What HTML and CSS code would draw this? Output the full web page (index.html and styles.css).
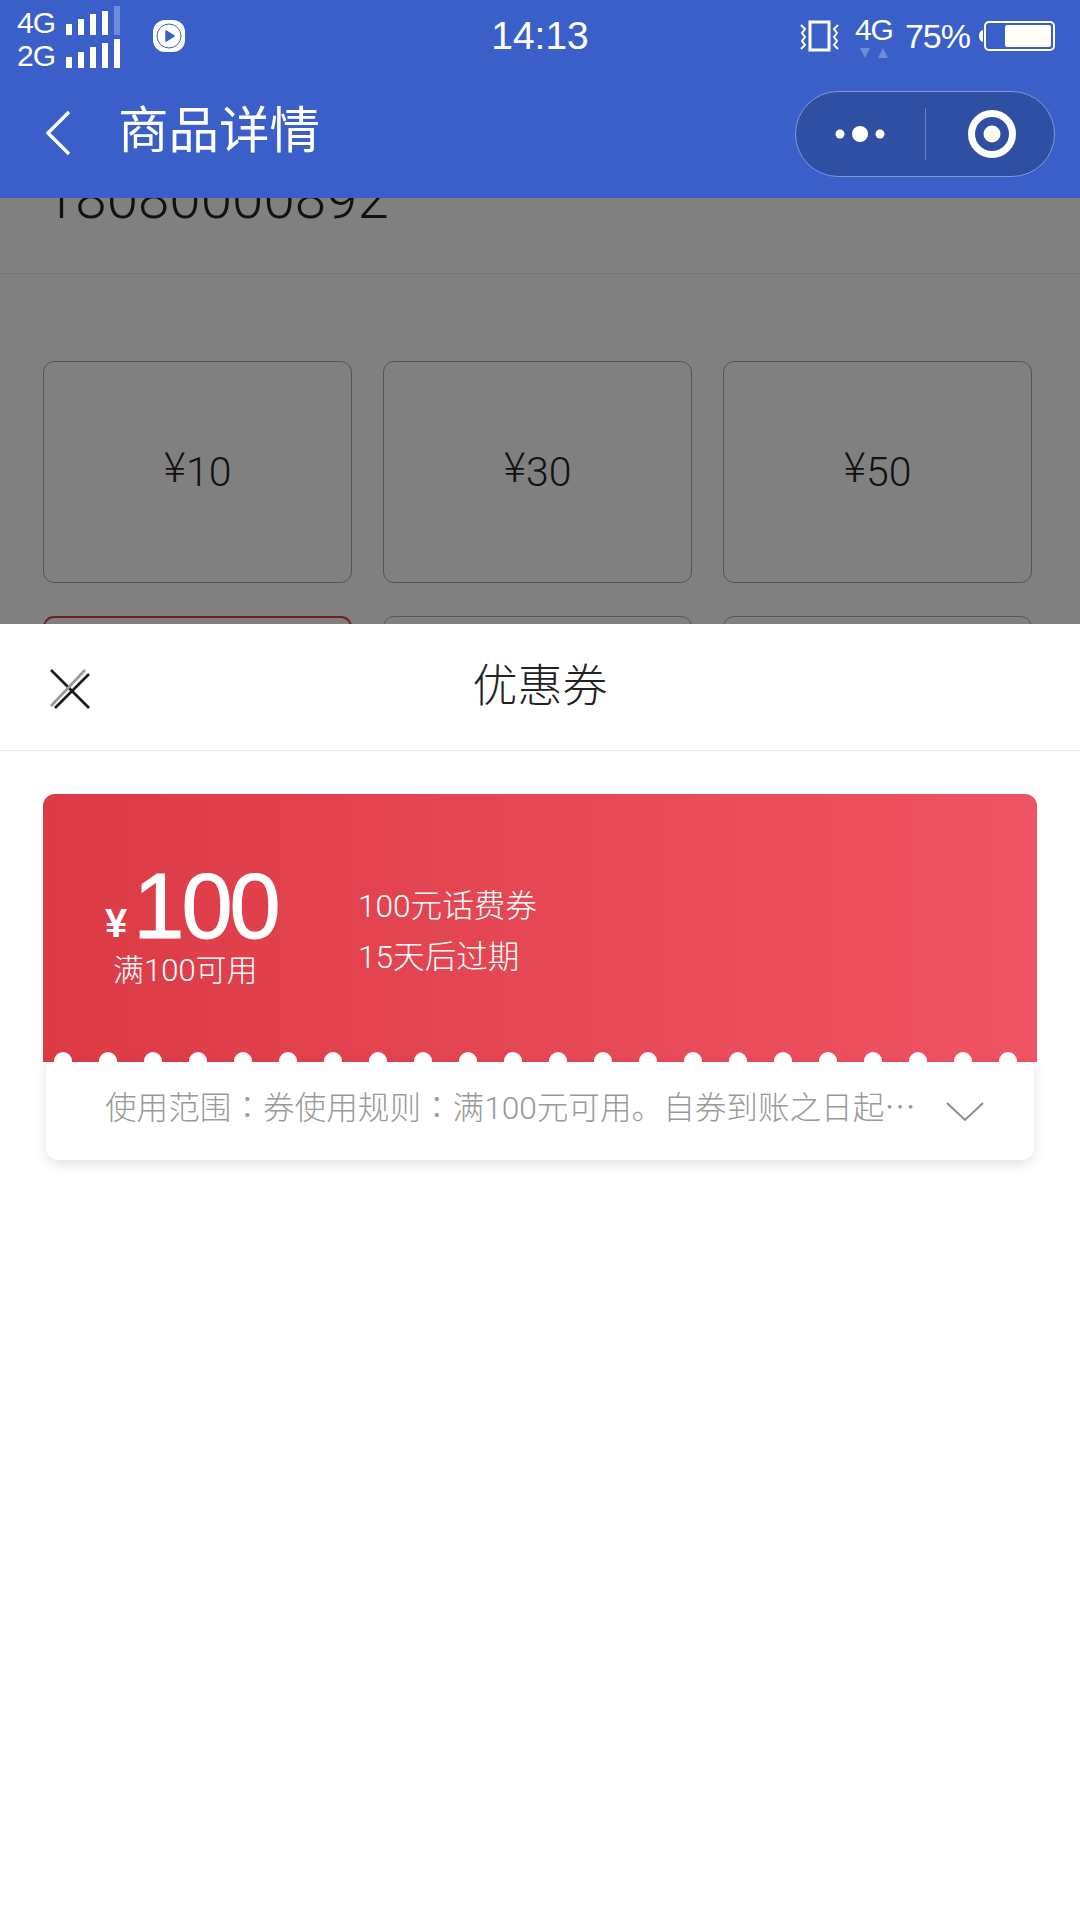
FILE: index.html
```html
<!DOCTYPE html>
<html lang="zh-CN">
<head>
    <meta charset="UTF-8">
    <title>商品详情</title>
    <link rel="stylesheet" href="styles.css">
</head>
<body>

<!-- Blue header -->
<header class="top">
    <div class="status">
        <div class="status-left">
            <div class="nets">
                <div class="net-row">
                    <span class="net-name">4G</span>
                    <svg class="bars" width="56" height="30" viewBox="0 0 56 30">
                        <rect x="0" y="18" width="6" height="11" fill="#fff"/>
                        <rect x="12" y="13" width="6" height="16" fill="#fff"/>
                        <rect x="24" y="8" width="6" height="21" fill="#fff"/>
                        <rect x="36" y="5" width="6" height="24" fill="#fff"/>
                        <rect x="48" y="0" width="6" height="29" fill="#6f8bdc"/>
                    </svg>
                </div>
                <div class="net-row">
                    <span class="net-name">2G</span>
                    <svg class="bars" width="56" height="30" viewBox="0 0 56 30">
                        <rect x="0" y="18" width="6" height="11" fill="#fff"/>
                        <rect x="12" y="13" width="6" height="16" fill="#fff"/>
                        <rect x="24" y="8" width="6" height="21" fill="#fff"/>
                        <rect x="36" y="4" width="6" height="25" fill="#fff"/>
                        <rect x="48" y="0" width="6" height="29" fill="#fff"/>
                    </svg>
                </div>
            </div>
            <svg class="media" width="32" height="32" viewBox="0 0 32 32">
                <rect width="32" height="32" rx="12" fill="#fff"/>
                <circle cx="16" cy="16" r="12" fill="none" stroke="#3a5fc8" stroke-width="1"/>
                <path d="M13 11 L21 16 L13 21 Z" fill="#3a5fc8" stroke="#3a5fc8" stroke-width="1.5" stroke-linejoin="round"/>
            </svg>
        </div>
        <div class="clock">14:13</div>
        <div class="status-right">
            <svg class="vibrate" width="39" height="32" viewBox="0 0 39 32">
                <rect x="10" y="2" width="19" height="28" fill="none" stroke="#fff" stroke-width="3"/>
                <path d="M1 5 L5 9 L2 13 L5 17 L2 21 L5 25 L1 29" fill="none" stroke="#fff" stroke-width="2"/>
                <path d="M38 5 L34 9 L37 13 L34 17 L37 21 L34 25 L38 29" fill="none" stroke="#fff" stroke-width="2"/>
            </svg>
            <div class="net-right">
                <span class="net-name">4G</span>
                <svg width="30" height="10" viewBox="0 0 30 10">
                    <path d="M1 0 H11 L6 10 Z" fill="#6f8bdc"/>
                    <path d="M19 10 H29 L24 0 Z" fill="#6f8bdc"/>
                </svg>
            </div>
            <span class="percent">75%</span>
            <svg class="battery" width="76" height="30" viewBox="0 0 76 30">
                <path d="M4 9 Q0 10 0 15 Q0 20 4 21 Z" fill="#fff"/>
                <rect x="6" y="1" width="69" height="28" rx="4" fill="none" stroke="#fff" stroke-width="2"/>
                <rect x="26" y="4" width="46" height="22" rx="2" fill="#fffdf5"/>
            </svg>
        </div>
    </div>
    <div class="nav">
        <svg class="back" width="26" height="46" viewBox="0 0 26 46">
            <path d="M24 2 L3 23 L24 44" fill="none" stroke="#fff" stroke-width="3.4"/>
        </svg>
        <span class="nav-title">商品详情</span>
        <div class="capsule">
            <div class="capsule-side">
                <svg width="50" height="18" viewBox="0 0 50 18">
                    <circle cx="5" cy="9" r="4.5" fill="#fff"/>
                    <circle cx="25" cy="9" r="8" fill="#fff"/>
                    <circle cx="45" cy="9" r="4.5" fill="#fff"/>
                </svg>
            </div>
            <div class="capsule-line"></div>
            <div class="capsule-side">
                <svg class="capsule-ring" width="48" height="48" viewBox="0 0 48 48">
                    <circle cx="24" cy="24" r="20.5" fill="none" stroke="#fff" stroke-width="7"/>
                    <circle cx="24" cy="24" r="8.5" fill="#fffdf5"/>
                </svg>
            </div>
        </div>
    </div>
</header>

<!-- Page behind the sheet, dimmed -->
<div class="behind">
    <div class="phone-row">18080000892</div>
    <div class="amounts">
        <div class="amount"><span><span class="cur">¥</span>10</span></div>
        <div class="amount"><span><span class="cur">¥</span>30</span></div>
        <div class="amount"><span><span class="cur">¥</span>50</span></div>
        <div class="amount amount-on"><span><span class="cur">¥</span>100</span></div>
        <div class="amount"><span><span class="cur">¥</span>200</span></div>
        <div class="amount"><span><span class="cur">¥</span>300</span></div>
    </div>
</div>

<!-- Coupon sheet -->
<div class="sheet">
    <div class="sheet-head">
        <svg class="close" width="40" height="40" viewBox="0 0 40 40">
            <path d="M1 1 L39 39" stroke="#1a1a1a" stroke-width="2.6"/>
            <path d="M1 37 L35 1" stroke="#999" stroke-width="2.6"/>
            <path d="M5 39 L39 5" stroke="#1a1a1a" stroke-width="2.6"/>
        </svg>
        <span class="sheet-title">优惠券</span>
    </div>

    <div class="coupon">
        <div class="coupon-top">
            <div class="coupon-main">
                <div class="price">
                    <div class="price-line"><span class="yen">¥</span><span class="price-num">100</span></div>
                    <div class="price-rule">满100可用</div>
                </div>
                <div class="coupon-info">
                    <div>100元话费券</div>
                    <div>15天后过期</div>
                </div>
            </div>
            <div class="bumps">
                <i></i><i></i><i></i><i></i><i></i><i></i><i></i><i></i><i></i><i></i><i></i>
                <i></i><i></i><i></i><i></i><i></i><i></i><i></i><i></i><i></i><i></i><i></i>
            </div>
        </div>
        <div class="coupon-foot">
            <span class="coupon-desc">使用范围<span class="colon" lang="zh-TW">&#xFF1A;</span>券使用规则<span class="colon" lang="zh-TW">&#xFF1A;</span>满100元可用。自券到账之日起⋯</span>
            <svg class="chevron" width="38" height="20" viewBox="0 0 38 20">
                <path d="M1 1 L19 18 L37 1" fill="none" stroke="#8a8a8a" stroke-width="1.8"/>
            </svg>
        </div>
    </div>
</div>

</body>
</html>
```

FILE: styles.css
```css
* {
    box-sizing: border-box;
}

html, body {
    margin: 0;
    height: 1920px;
    overflow: hidden;
}

body {
    font-family: "Liberation Sans", "Noto Sans CJK SC", sans-serif;
    font-weight: 300;
    background: #fff;
    display: flex;
    flex-direction: column;
}

/* Header */
.top {
    height: 198px;
    flex: none;
    background: #3a5fc8;
    color: #fff;
}

.status {
    height: 72px;
    display: grid;
    grid-template-columns: 1fr auto 1fr;
    align-items: center;
    padding: 0 25px 0 17px;
}

.status-left {
    display: flex;
    align-items: center;
    gap: 31px;
}

.nets {
    display: flex;
    flex-direction: column;
    margin-top: -1px;
}

.net-row {
    display: flex;
    align-items: flex-end;
    gap: 11px;
    height: 33px;
}

.net-name {
    font-size: 30px;
    line-height: 26px;
    letter-spacing: -1px;
}

.bars {
    display: block;
}

.clock {
    font-size: 39px;
    margin-left: 8px;
}

.status-right {
    display: flex;
    justify-content: flex-end;
    align-items: center;
}

.vibrate {
    margin-right: 16px;
}

.net-right {
    display: flex;
    flex-direction: column;
    align-items: center;
    gap: 5px;
    margin-right: 12px;
    margin-top: 2px;
}

.net-right svg {
    display: block;
}

.percent {
    font-size: 34px;
    letter-spacing: -1px;
    margin-right: 9px;
}

.battery {
    display: block;
}

.nav {
    height: 126px;
    display: flex;
    align-items: center;
    padding: 0 25px 12px 45px;
}

.back {
    flex: none;
    margin-top: 8px;
}

.nav-title {
    font-size: 50.5px;
    font-weight: 400;
    margin: -6px 0 0 47px;
    flex: 1;
}

.capsule {
    width: 260px;
    height: 86px;
    margin-top: 10px;
    border: 1px solid #7f97dc;
    border-radius: 43px;
    background: #2f50a2;
    display: flex;
    align-items: center;
}

.capsule-side {
    flex: 1;
    display: flex;
    justify-content: center;
    align-items: center;
}

.capsule-side svg {
    display: block;
}

.capsule-ring {
    margin-left: 4px;
}

.capsule-line {
    width: 1px;
    height: 52px;
    background: #6480cc;
}

/* Dimmed page */
.behind {
    height: 426px;
    flex: none;
    overflow: hidden;
    background: #808080;
    color: #111;
    font-family: Roboto, "Liberation Sans", sans-serif;
}

.phone-row {
    border-bottom: 1px solid #767676;
    margin-top: -30px;
    height: 106px;
    padding-left: 44px;
    font-size: 56.5px;
    line-height: 62px;
}

.amounts {
    display: grid;
    grid-template-columns: repeat(3, 309px);
    column-gap: 31px;
    row-gap: 33px;
    padding: 87px 0 0 43px;
}

.amount {
    height: 222px;
    border: 1.5px solid #555;
    border-radius: 11px;
    display: flex;
    justify-content: center;
    align-items: center;
    font-size: 41px;
    line-height: 48px;
}

.cur {
    font-family: "Noto Sans CJK SC", sans-serif;
    font-size: 42px;
    line-height: 0;
    vertical-align: 4px;
}

.amount-on {
    border: 2px solid #702020;
}

/* Sheet */
.sheet {
    flex: 1;
    background: #fff;
}

.sheet-head {
    height: 127px;
    border-bottom: 1px solid #ececec;
    display: flex;
    justify-content: center;
    align-items: center;
    position: relative;
}

.close {
    position: absolute;
    left: 50px;
    top: 45px;
}

.sheet-title {
    font-size: 45px;
    color: #222;
    margin-top: -9px;
}

.coupon {
    margin: 43px 43px 0 43px;
    color: #fff;
}

.coupon-top {
    height: 268px;
    border-radius: 12px 12px 0 0;
    background: linear-gradient(90deg, #dc3b45, #ef5464);
    display: flex;
    flex-direction: column;
}

.coupon-main {
    flex: 1;
    display: flex;
    padding: 74px 0 0 62px;
}

.price {
    width: 253px;
}

.price-line {
    display: flex;
    align-items: flex-end;
    height: 76px;
}

.yen {
    font-family: "Liberation Sans", sans-serif;
    font-size: 40px;
    font-weight: 700;
    line-height: 44px;
    margin-right: 6px;
    margin-bottom: -1px;
}

.price-num {
    font-size: 92px;
    line-height: 76px;
    letter-spacing: -3px;
    -webkit-text-stroke: 1px #fff;
}

.price-rule {
    font-family: Roboto, "Noto Sans CJK SC", sans-serif;
    font-size: 31px;
    line-height: 40px;
    margin: 7px 0 0 8px;
}

.coupon-info {
    font-family: Roboto, "Noto Sans CJK SC", sans-serif;
    font-size: 31.6px;
    line-height: 51px;
    margin-top: 13px;
}

.bumps {
    height: 10px;
    display: flex;
    gap: 27px;
    padding-left: 11px;
}

.bumps i {
    display: block;
    width: 18px;
    height: 10px;
    background: #fff;
    border-radius: 9px 9px 0 0;
}

.coupon-foot {
    margin: 0 3px;
    height: 98px;
    background: #fff;
    border-radius: 0 0 12px 12px;
    box-shadow: 0 4px 14px rgba(0, 0, 0, 0.12);
    display: flex;
    align-items: center;
    padding: 0 0 0 59px;
}

.coupon-desc {
    font-family: Roboto, "Noto Sans CJK SC", sans-serif;
    font-size: 31.6px;
    color: #999;
    white-space: nowrap;
    margin-top: -12px;
    width: 841px;
}

.colon {
    font-family: "Noto Sans CJK TC", sans-serif;
}

.chevron {
    margin-top: 1px;
}
```
